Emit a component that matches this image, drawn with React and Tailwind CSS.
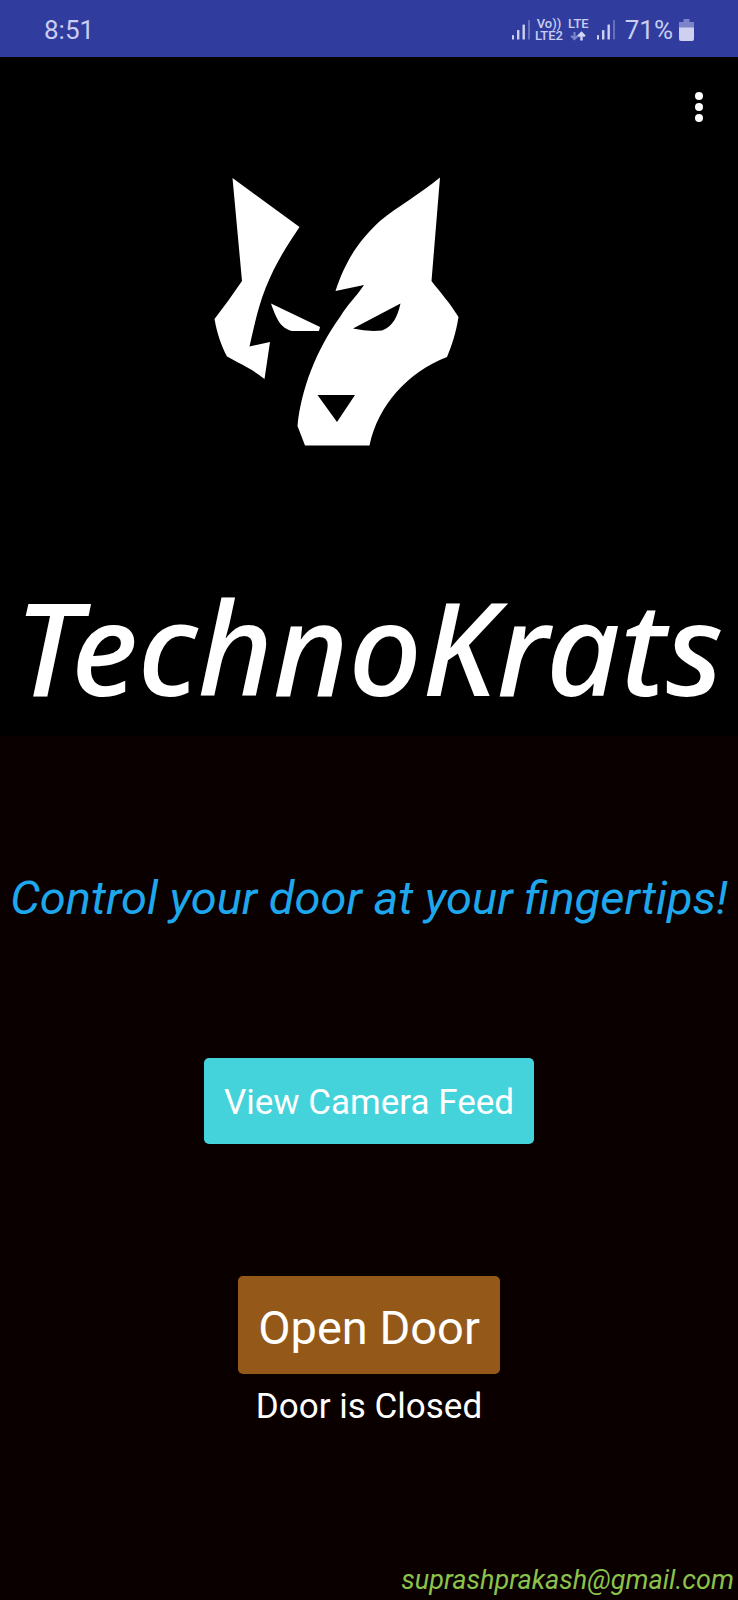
import React from "react";

function SignalIcon() {
  return (
    <svg viewBox="0 0 18 20" className="h-5 w-[18px]" fill="#cdd0ee" aria-hidden="true">
      <rect x="0" y="15" width="2" height="4.5" rx="0.6" />
      <rect x="5" y="10" width="2.4" height="9.5" rx="0.6" />
      <rect x="10.5" y="4.500" width="2.400" height="15" rx="0.6" />
      <rect x="16" y="0" width="2" height="19.500" rx="0.6" opacity="0.35" />
    </svg>
  );
}

function DataArrowsIcon() {
  return (
    <svg viewBox="0 0 16 10" className="h-[10px] w-4" fill="none" strokeWidth="2" aria-hidden="true">
      <path d="M4.500 1v7M1.200 4.800l3.300 3.300 3.300-3.300" stroke="#7f88cc" />
      <path d="M11.500 9.500V2.200M8.200 5.400l3.300-3.400 3.300 3.400" stroke="#d5d8f4" strokeWidth="2.400" />
    </svg>
  );
}

function BatteryIcon() {
  return (
    <svg viewBox="0 0 15 22" className="h-[22px] w-[15px]" aria-hidden="true">
      <path d="M4.500 0h6v3H15v6H0V3h4.500z" fill="#7b84c8" />
      <path d="M0 8.500h15V20a2 2 0 0 1-2 2H2a2 2 0 0 1-2-2z" fill="#cdd0ee" />
    </svg>
  );
}

function StatusBar() {
  return (
    <div className="flex h-[57px] items-center justify-between bg-[#303d9f] pt-[2px] pr-11 pl-11 text-[#c9cdf0]">
      <time className="text-[26px] leading-8">8:51</time>
      <div className="flex items-center">
        <SignalIcon />
        <div className="ml-[5px] flex flex-col items-center text-[13px] leading-3 font-medium">
          <span>Vo))</span>
          <span>LTE2</span>
        </div>
        <div className="ml-[5px] flex flex-col items-center text-[13px] leading-3 font-medium">
          <span>LTE</span>
          <span className="flex h-3 items-center">
            <DataArrowsIcon />
          </span>
        </div>
        <div className="ml-2">
          <SignalIcon />
        </div>
        <span className="mr-[6px] ml-[10px] text-[26px] leading-8">71%</span>
        <BatteryIcon />
      </div>
    </div>
  );
}

function WolfLogo() {
  return (
    <svg viewBox="0 157 738 303" className="block w-full" fill="#fff" role="img" aria-label="Wolf head">
      <path d="M232.500 178 L299.500 227 C284 250 275 265 266 287 C259 305 256 318 249.500 346.500 L270 342 L264.500 379 C251 368 240 364 227 356.500 C221 345 217 333 214.500 319 L228 301 L242 281 Z" />
      <path d="M271 303.500 L320 327 L319 331 H292 C281 328 277 321 271 303.500 Z" />
      <path
        fillRule="evenodd"
        d="M440 177.500 L431.500 281 C440 292 450 303 458.500 317 C456 333 452 345 447 357 C408 372 378 405 369.500 445.500 H305 L297.500 426 C301 390 316 350 340 317 C347 305 356 297 364 285 L335.500 291 C347 256 362 238 380 221 C397 207 420 194 440 177.500 Z M400.500 303.500 L353 328.500 Q368 332 382 330.500 C393 326 397 318 400.500 303.500 Z M317.500 395 H355 L337 422 Z"
      />
    </svg>
  );
}

function Brand() {
  return (
    <header className="bg-black pb-5">
      <div className="flex h-[100px] items-center justify-end pr-6">
        <button type="button" aria-label="More options" className="flex h-12 w-[31px] items-center justify-center">
          <svg viewBox="0 0 8 30" className="h-[30px] w-2" fill="#fff" aria-hidden="true">
            <circle cx="4" cy="4" r="4" />
            <circle cx="4" cy="15" r="4" />
            <circle cx="4" cy="26" r="4" />
          </svg>
        </button>
      </div>
      <WolfLogo />
      <h1 className="mt-[116px] text-center font-['Noto_Sans',sans-serif] text-[129px] leading-[140px] font-medium whitespace-nowrap text-white italic">
        TechnoKrats
      </h1>
    </header>
  );
}

export default function App() {
  return (
    <div className="flex min-h-screen flex-col bg-[#0a0000] font-['Roboto',sans-serif]">
      <StatusBar />
      <Brand />
      <main className="flex flex-1 flex-col items-center">
        <p className="mt-[132px] text-[47px] leading-[60px] whitespace-nowrap text-[#1ea7ec] italic">
          Control your door at your fingertips!
        </p>
        <button type="button" className="mt-[130px] rounded-[5px] bg-[#44d3db] px-5 pt-6 pb-5 text-[35px] leading-[42px] text-white">
          View Camera Feed
        </button>
        <button type="button" className="mt-[132px] rounded-[5px] bg-[#945919] px-5 pt-6 pb-[18px] text-[47px] leading-[56px] text-white">
          Open Door
        </button>
        <p role="status" className="mt-3 text-[35px] leading-[42px] text-white">Door is Closed</p>
      </main>
      <footer className="flex justify-end pr-1">
        <a href="mailto:suprashprakash@gmail.com" className="text-[27px] leading-10 text-[#8bc34a] italic">
          suprashprakash@gmail.com
        </a>
      </footer>
    </div>
  );
}
